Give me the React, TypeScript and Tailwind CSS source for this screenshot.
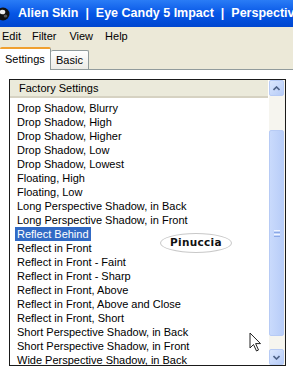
const items = [
  'Drop Shadow, Blurry',
  'Drop Shadow, High',
  'Drop Shadow, Higher',
  'Drop Shadow, Low',
  'Drop Shadow, Lowest',
  'Floating, High',
  'Floating, Low',
  'Long Perspective Shadow, in Back',
  'Long Perspective Shadow, in Front',
  'Reflect Behind',
  'Reflect in Front',
  'Reflect in Front - Faint',
  'Reflect in Front - Sharp',
  'Reflect in Front, Above',
  'Reflect in Front, Above and Close',
  'Reflect in Front, Short',
  'Short Perspective Shadow, in Back',
  'Short Perspective Shadow, in Front',
  'Wide Perspective Shadow, in Back',
]

function ScrollButton({ down }: { down?: boolean }) {
  return (
    <div className="h-[16px] w-[15px] rounded-[2px] border border-[#b7cbf5] bg-gradient-to-br from-[#dbe7fd] to-[#b6cbf7] flex items-center justify-center">
      <svg width="7" height="5" viewBox="0 0 7 5">
        <path
          d={down ? 'M0.5 1 L3.5 4 L6.5 1' : 'M0.5 4 L3.5 1 L6.5 4'}
          fill="none"
          stroke="#4d6185"
          strokeWidth="1.6"
        />
      </svg>
    </div>
  )
}

export default function App() {
  return (
    <div className="w-[293px] h-[368px] overflow-hidden bg-white relative font-['Liberation_Sans',Arial,sans-serif]">
      {/* Title bar */}
      <div className="h-[27px] flex items-center bg-gradient-to-b from-[#2a7cf6] via-[#0656e6] to-[#0046cf] whitespace-nowrap overflow-hidden">
        <svg width="14" height="16" viewBox="0 0 14 16" className="shrink-0 ml-[-4px] mr-[8px]">
          <ellipse cx="7" cy="8" rx="6.5" ry="6.5" fill="#111" />
          <ellipse cx="6.5" cy="6" rx="2.8" ry="2.3" fill="#eee" />
          <ellipse cx="9.5" cy="10" rx="1.8" ry="1.5" fill="#555" />
        </svg>
        <span className="shrink-0 text-white font-bold text-[12.5px] whitespace-pre">
          {'Alien Skin  |  Eye Candy 5 Impact  |  Perspective Shadow'}
        </span>
      </div>

      {/* Menu bar */}
      <div className="h-[18px] bg-[#ece9d8] flex items-center text-[11px] text-black">
        <span className="ml-[2px]">Edit</span>
        <span className="ml-[11px]">Filter</span>
        <span className="ml-[13px]">View</span>
        <span className="ml-[12px]">Help</span>
      </div>

      {/* Tabs */}
      <div className="h-[25px] bg-[#ece9d8] flex items-end relative">
        <div className="absolute left-0 right-0 bottom-0 h-px bg-[#919b9c]" />
        <div className="relative z-10 w-[51px] h-[23px] bg-white border-t-[2px] border-t-[#f0a030] border-r border-r-[#919b9c] rounded-t-[2px] flex items-center pl-[5px] text-[11px] text-black">
          Settings
        </div>
        <div className="w-[38px] h-[19px] mb-px bg-gradient-to-b from-white to-[#ecebe6] border border-[#919b9c] border-l-0 border-b-0 rounded-t-[2px] flex items-center pl-[5px] text-[11px] text-black">
          Basic
        </div>
      </div>

      {/* Content */}
      <div className="pt-[9px] pl-[9px]">
        <div className="w-[277px] h-[287px] border border-[#1a1a1a] flex overflow-hidden">
          <div className="flex-1 flex flex-col overflow-hidden">
            <div className="h-[18px] shrink-0 bg-[#ebeadb] border-b-[2px] border-b-[#d6d2c2] mr-[1px] flex items-center pl-[9px] text-[11px] text-black">
              Factory Settings
            </div>
            <div className="pt-[3px] pl-[5px] text-[11px] text-black whitespace-nowrap">
              {items.map((item) => (
                <div key={item} className="h-[14px] flex items-center">
                  <span
                    className={
                      item === 'Reflect Behind'
                        ? 'bg-[#316ac5] text-white px-[2px] h-[14px] leading-[14px]'
                        : 'px-[2px] leading-[14px]'
                    }
                  >
                    {item}
                  </span>
                </div>
              ))}
            </div>
          </div>

          {/* Scrollbar */}
          <div className="w-[16px] shrink-0 bg-[#f6f5ef] flex flex-col">
            <ScrollButton />
            <div className="flex-1 relative">
              <div className="absolute left-0 top-[34px] w-[15px] h-[206px] rounded-[2px] border border-[#b7cbf5] bg-gradient-to-r from-[#c9dafc] to-[#b8cdf8] flex flex-col items-center justify-center gap-[1px]">
                <div className="w-[6px] h-px bg-[#eef3fe]" />
                <div className="w-[6px] h-px bg-[#8ca9e6]" />
                <div className="w-[6px] h-px bg-[#eef3fe]" />
                <div className="w-[6px] h-px bg-[#8ca9e6]" />
              </div>
            </div>
            <ScrollButton down />
          </div>
        </div>
      </div>

      {/* Watermark */}
      <div className="absolute left-[160px] top-[233px] w-[72px] h-[20px] rounded-[50%] border border-[#c8c8c8] bg-white/80 flex items-center justify-center">
        <span className="font-['DejaVu_Sans',sans-serif] font-bold text-[10.5px] text-[#111] tracking-[0.3px]">
          Pinuccia
        </span>
      </div>

      {/* Cursor */}
      <svg
        className="absolute left-[249px] top-[332px]"
        width="14"
        height="22"
        viewBox="0 0 14 22"
      >
        <path
          d="M1 1 L1 16 L4.5 12.5 L7.5 19 L9.5 18 L6.6 11.6 L11.5 11.6 Z"
          fill="white"
          stroke="#222"
          strokeWidth="1"
          strokeLinejoin="miter"
        />
      </svg>
    </div>
  )
}
